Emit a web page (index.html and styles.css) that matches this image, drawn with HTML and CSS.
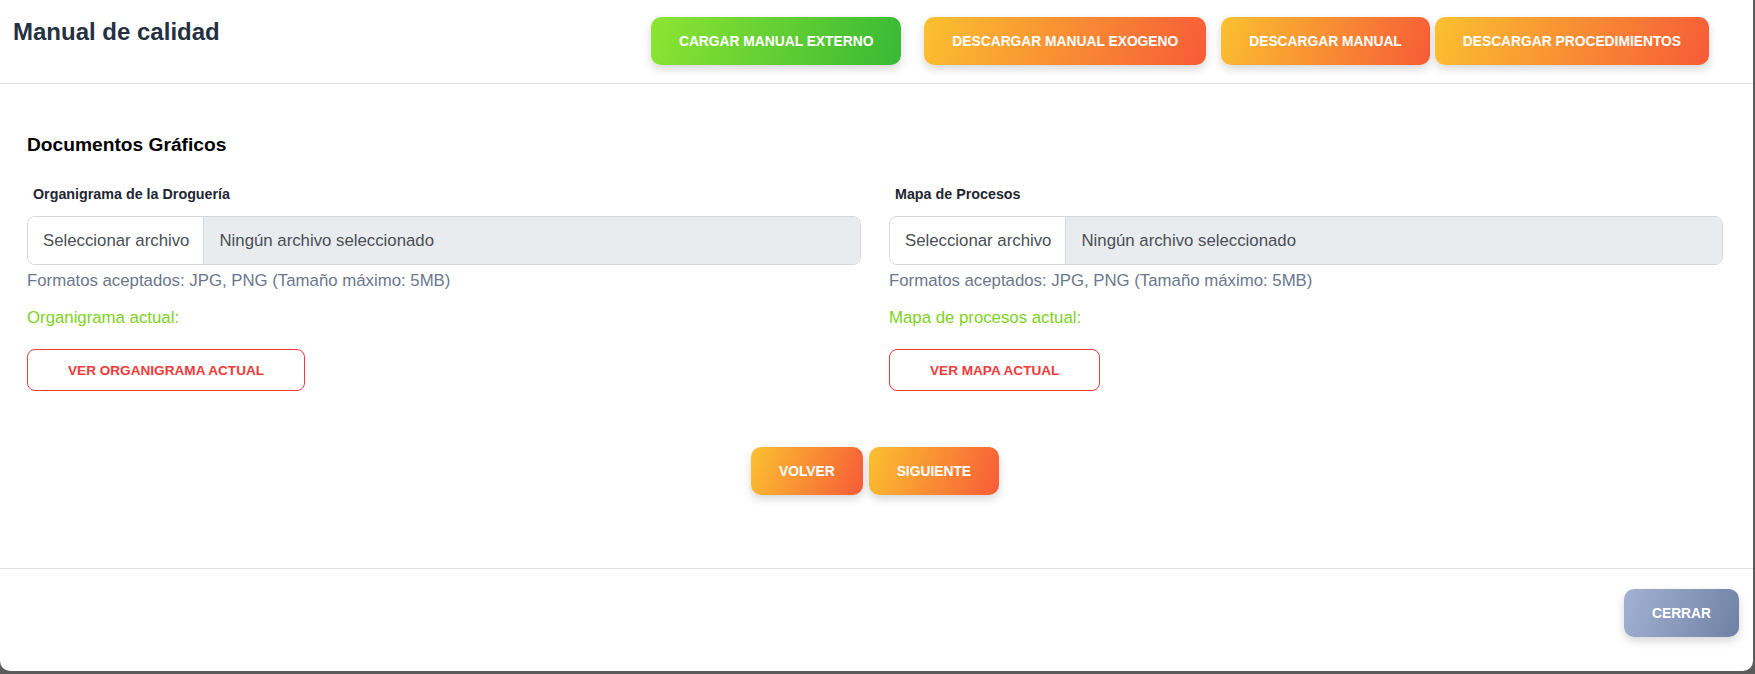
FILE: index.html
```html
<!DOCTYPE html>
<html lang="es">
<head>
<meta charset="utf-8">
<title>Manual de calidad</title>
<link rel="stylesheet" href="styles.css">
</head>
<body>
<div class="modal">
  <header class="modal-header">
    <h1 class="title">Manual de calidad</h1>
    <div class="actions">
      <button class="btn btn-green btn-cargar">CARGAR MANUAL EXTERNO</button>
      <button class="btn btn-orange btn-exogeno">DESCARGAR MANUAL EXOGENO</button>
      <button class="btn btn-orange btn-manual">DESCARGAR MANUAL</button>
      <button class="btn btn-orange">DESCARGAR PROCEDIMIENTOS</button>
    </div>
  </header>
  <main class="modal-body">
    <h2 class="section-title">Documentos Gráficos</h2>
    <div class="columns">
      <div class="field">
        <label class="field-label">Organigrama de la Droguería</label>
        <div class="file-input">
          <span class="file-btn">Seleccionar archivo</span>
          <span class="file-name">Ningún archivo seleccionado</span>
        </div>
        <p class="hint">Formatos aceptados: JPG, PNG (Tamaño máximo: 5MB)</p>
        <p class="current">Organigrama actual:</p>
        <button class="btn-outline">VER ORGANIGRAMA ACTUAL</button>
      </div>
      <div class="field">
        <label class="field-label">Mapa de Procesos</label>
        <div class="file-input">
          <span class="file-btn">Seleccionar archivo</span>
          <span class="file-name">Ningún archivo seleccionado</span>
        </div>
        <p class="hint">Formatos aceptados: JPG, PNG (Tamaño máximo: 5MB)</p>
        <p class="current">Mapa de procesos actual:</p>
        <button class="btn-outline">VER MAPA ACTUAL</button>
      </div>
    </div>
    <div class="nav">
      <button class="btn btn-orange">VOLVER</button>
      <button class="btn btn-orange">SIGUIENTE</button>
    </div>
  </main>
  <footer class="modal-footer">
    <button class="btn btn-gray">CERRAR</button>
  </footer>
</div>
</body>
</html>
```

FILE: styles.css
```css
* { box-sizing: border-box; }
html, body { margin: 0; padding: 0; }
body {
  background: #5b5b5b;
  font-family: Arial, "Liberation Sans", sans-serif;
  height: 674px;
  overflow: hidden;
}
.modal {
  background: #fff;
  width: 1753px;
  height: 671px;
  border-radius: 0 0 10px 10px;
  display: flex;
  flex-direction: column;
}
.modal-header {
  display: flex;
  justify-content: space-between;
  align-items: flex-start;
  padding: 17px 44px 18px 13px;
  border-bottom: 1px solid #dee2e6;
}
.title {
  margin: 1px 0 0;
  font-size: 24px;
  line-height: 1.2;
  font-weight: 700;
  color: #253041;
}
.actions { display: flex; }
.btn {
  height: 48px;
  padding: 0 28px;
  border: none;
  border-radius: 10px;
  color: #fff;
  font-family: Arial, "Liberation Sans", sans-serif;
  font-size: 13.8px;
  font-weight: 700;
  box-shadow: 0 4px 10px rgba(0, 0, 0, 0.16);
  cursor: pointer;
}
.btn-green { background: linear-gradient(110deg, #8ee532 0%, #38b935 100%); }
.btn-orange { background: linear-gradient(110deg, #fbc130 0%, #f75b37 100%); }
.btn-gray { background: linear-gradient(110deg, #a3b2d2 0%, #6f81a4 100%); }
.btn-cargar { margin-right: 23px; }
.btn-exogeno { margin-right: 15px; }
.btn-manual { margin-right: 5px; }

.modal-body {
  flex: 1;
  padding: 49px 30px 0 27px;
  border-bottom: 1px solid #dee2e6;
}
.section-title {
  margin: 0 0 28px;
  font-size: 19.2px;
  line-height: 23px;
  font-weight: 700;
  color: #000;
}
.columns {
  display: grid;
  grid-template-columns: 1fr 1fr;
  column-gap: 28px;
}
.field { display: flex; flex-direction: column; align-items: flex-start; }
.field-label {
  display: block;
  padding-left: 6px;
  font-size: 14.3px;
  line-height: 21px;
  font-weight: 700;
  color: #1f2633;
  margin-bottom: 11px;
}
.file-input {
  width: 100%;
  height: 49px;
  display: flex;
  border: 1px solid #d3d8de;
  border-radius: 8px;
  overflow: hidden;
  font-size: 16.8px;
  color: #4a4f55;
}
.file-btn {
  display: flex;
  align-items: center;
  padding: 0 14px 0 15px;
  background: #fff;
  border-right: 1px solid #d3d8de;
  white-space: nowrap;
}
.file-name {
  flex: 1;
  display: flex;
  align-items: center;
  padding: 0 15px;
  background: #e9ecef;
}
.hint {
  margin: 3px 0 0;
  font-size: 16.8px;
  line-height: 25px;
  color: #6b778c;
}
.current {
  margin: 12px 0 0;
  font-size: 16.8px;
  line-height: 25px;
  color: #7ed321;
}
.btn-outline {
  margin-top: 19px;
  height: 42px;
  padding: 0 40px;
  background: #fff;
  border: 1px solid #f03a3a;
  border-radius: 8px;
  color: #f03a3a;
  font-family: Arial, "Liberation Sans", sans-serif;
  font-size: 13.6px;
  font-weight: 700;
  cursor: pointer;
}
.nav {
  display: flex;
  justify-content: center;
  gap: 6px;
  margin-top: 56px;
}
.modal-footer {
  display: flex;
  justify-content: flex-end;
  padding: 20px 14px 0 0;
  height: 102px;
}
```
